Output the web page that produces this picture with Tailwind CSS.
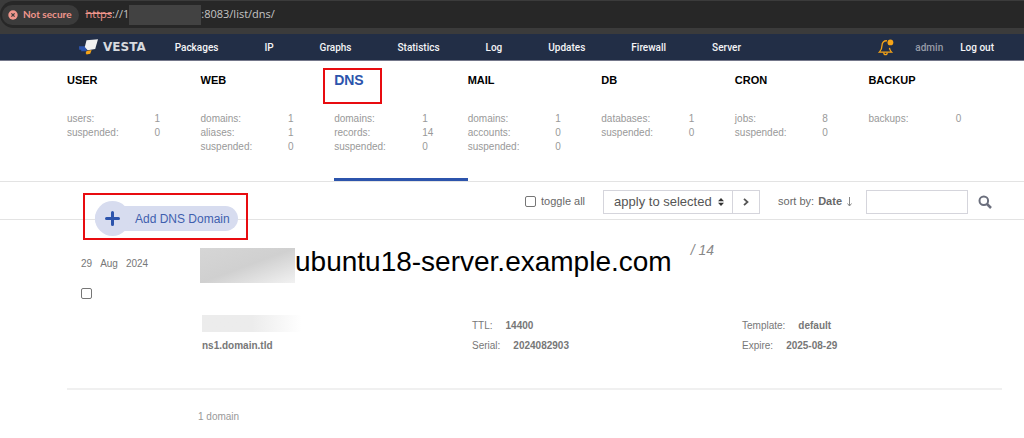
<!DOCTYPE html>
<html lang="en">
<head>
    <meta charset="UTF-8">
    <meta name="viewport" content="width=device-width, initial-scale=1.0">
    <title>Vesta - DNS</title>
    <script src="https://cdn.jsdelivr.net/npm/@tailwindcss/browser@4"></script>
</head>
<body class="bg-white font-['Liberation_Sans',Arial,sans-serif] text-[10px] text-[#777]">

    <!-- Address bar -->
    <div class="bg-[#3b3b3b] pt-px pb-1.5">
        <div class="flex h-[27px] items-center rounded-l-full bg-[#272727] pl-0.5">
            <div class="flex h-5 items-center gap-[5px] rounded-full bg-[#3b3b3b] pr-2 pl-1.5 font-[Lato,sans-serif] text-[10px] font-bold text-[#f0968c]">
                <svg class="size-2.5" viewBox="0 0 10 10">
                    <circle cx="5" cy="5" r="4.7" fill="#f0968c"/>
                    <path d="M3.4 3.4l3.2 3.2M6.6 3.4L3.4 6.6" stroke="#3b3b3b" stroke-width="1.2"/>
                </svg>
                Not secure
            </div>
            <div class="flex items-center pl-1.5 font-['Open_Sans',sans-serif] text-[11px] text-[#c4c4c4]">
                <span class="text-[#f0968c] line-through">https</span><span>://1</span>
                <span class="h-5 w-[72px] bg-[#424242]"></span>
                <span>:8083/list/dns/</span>
            </div>
        </div>
    </div>

    <!-- Top menu -->
    <header class="flex h-[27px] items-center border-b border-[#74778a] bg-[#222e46] pr-[30px] pl-[79px] font-[Roboto,sans-serif] text-[10px] font-medium text-[#f4f4f6]">
        <a href="#" class="mr-[29px] flex items-center gap-[5px] font-['DejaVu_Sans',sans-serif] text-xs font-bold text-[#d8dade]">
            <svg class="h-4 w-[19px]" viewBox="0 0 19 16">
                <path d="M0 7.200h6.500L8 12.300H2.200V10.800H.2z" fill="#2c54ac"/>
                <path d="M7.500 1.200L19 .3 16.200 10 8.600 11.200 5.800 8z" fill="#f1f1f1"/>
                <path d="M7.600 12l5-1-1.400 3.800-3.600.7-1-1.400z" fill="#f6a417"/>
            </svg>
            VESTA
        </a>
        <nav class="flex gap-[46px]">
            <a href="#">Packages</a>
            <a href="#">IP</a>
            <a href="#">Graphs</a>
            <a href="#">Statistics</a>
            <a href="#">Log</a>
            <a href="#">Updates</a>
            <a href="#">Firewall</a>
            <a href="#">Server</a>
        </nav>
        <div class="ml-auto flex items-center">
            <button type="button" aria-label="Notifications" class="mr-[21px]">
                <svg class="h-[17px] w-4" viewBox="0 0 16 17" fill="none" stroke="#f6a417" stroke-width="1.3">
                    <path d="M9 1.800C5.800 1.500 4 3.800 4 6.500c0 3.500-.8 4.800-2.600 6.600h12.200c-1.200-1.200-1.900-2.200-2.200-4.300"/>
                    <path d="M5.800 13.400a1.700 2.300 0 0 0 3.400 0"/>
                    <circle cx="12.400" cy="3.400" r="2.900" fill="#f6a417" stroke="none"/>
                </svg>
            </button>
            <a href="#" class="mr-[17px] text-[#989ca8]">admin</a>
            <a href="#">Log out</a>
        </div>
    </header>

    <!-- Section stats -->
    <section class="border-b border-[#e3e3e3] pr-[22px] pl-[67px] leading-[14px] text-[#999]">
        <div class="grid h-[120px] grid-cols-7">
            <a href="#" class="pt-3">
                <h2 class="mb-[25px] text-[11px] font-bold text-black">USER</h2>
                <p class="flex w-[93px] justify-between"><span>users:</span><span>1</span></p>
                <p class="flex w-[93px] justify-between"><span>suspended:</span><span>0</span></p>
            </a>
            <a href="#" class="pt-3">
                <h2 class="mb-[25px] text-[11px] font-bold text-black">WEB</h2>
                <p class="flex w-[93px] justify-between"><span>domains:</span><span>1</span></p>
                <p class="flex w-[93px] justify-between"><span>aliases:</span><span>1</span></p>
                <p class="flex w-[93px] justify-between"><span>suspended:</span><span>0</span></p>
            </a>
            <a href="#" class="relative border-b-3 border-[#2c54ac] pt-3">
                <h2 class="mb-[25px] text-sm leading-[14px] font-bold text-[#2c54ac]">DNS</h2>
                <p class="flex"><span class="w-[88px]">domains:</span><span>1</span></p>
                <p class="flex"><span class="w-[88px]">records:</span><span>14</span></p>
                <p class="flex"><span class="w-[88px]">suspended:</span><span>0</span></p>
                <span class="absolute top-[7px] -left-[11px] h-9 w-[59px] border-2 border-[#e80c10]"></span>
            </a>
            <a href="#" class="pt-3">
                <h2 class="mb-[25px] text-[11px] font-bold text-black">MAIL</h2>
                <p class="flex w-[93px] justify-between"><span>domains:</span><span>1</span></p>
                <p class="flex w-[93px] justify-between"><span>accounts:</span><span>0</span></p>
                <p class="flex w-[93px] justify-between"><span>suspended:</span><span>0</span></p>
            </a>
            <a href="#" class="pt-3">
                <h2 class="mb-[25px] text-[11px] font-bold text-black">DB</h2>
                <p class="flex w-[93px] justify-between"><span>databases:</span><span>1</span></p>
                <p class="flex w-[93px] justify-between"><span>suspended:</span><span>0</span></p>
            </a>
            <a href="#" class="pt-3">
                <h2 class="mb-[25px] text-[11px] font-bold text-black">CRON</h2>
                <p class="flex w-[93px] justify-between"><span>jobs:</span><span>8</span></p>
                <p class="flex w-[93px] justify-between"><span>suspended:</span><span>0</span></p>
            </a>
            <a href="#" class="pt-3">
                <h2 class="mb-[25px] text-[11px] font-bold text-black">BACKUP</h2>
                <p class="flex w-[93px] justify-between"><span>backups:</span><span>0</span></p>
            </a>
        </div>
    </section>

    <!-- Toolbar -->
    <section class="relative flex h-[38px] items-center justify-end border-b border-[#e3e3e3] pt-0.5 pr-8 text-[11px] text-[#686868]">
        <!-- the add button hangs over the bottom line -->
        <div class="absolute top-[11px] left-[83px] flex h-[47px] w-[165px] items-center border-2 border-[#e80c10] pt-1 pl-2.5">
            <button type="button" class="flex h-[25px] items-center rounded-full bg-[#d7dcef] pr-2 text-xs text-[#3f5fae]">
                <span class="mr-[5px] flex size-[35px] items-center justify-center rounded-full bg-[#d7dcef]">
                    <svg class="size-[15px]" viewBox="0 0 15 15"><path d="M7.500 1.500v12M1.500 7.500h12" stroke="#2c54ac" stroke-width="3" stroke-linecap="round"/></svg>
                </span>
                Add DNS Domain
            </button>
        </div>

        <label class="mr-[18px] flex items-center gap-[5px]">
            <input type="checkbox" class="size-[11px] appearance-none rounded-xs border border-[#767676] bg-white">
            toggle all
        </label>
        <form class="mr-[18px] flex h-6 border border-[#d5d5dc]">
            <div class="relative">
                <select aria-label="Bulk action" class="h-full w-32 appearance-none bg-white pl-2.5 text-[13px] text-[#555]">
                    <option>apply to selected</option>
                </select>
                <svg class="pointer-events-none absolute top-[7px] right-2 h-2 w-1.5" viewBox="0 0 6 8" fill="#333"><path d="M0 3.200L3 0l3 3.200zM0 4.800L3 8l3-3.200z"/></svg>
            </div>
            <button type="submit" aria-label="Apply" class="flex w-[27px] items-center justify-center border-l border-[#d5d5dc]">
                <svg class="h-2 w-1.5" viewBox="0 0 6 8" fill="none" stroke="#555" stroke-width="1.800"><path d="M1 .8L4.500 4 1 7.200"/></svg>
            </button>
        </form>
        <p class="mr-[13px] flex items-center gap-1">
            sort by: <b>Date</b>
            <svg class="h-2.5 w-[7px]" viewBox="0 0 7 10" fill="none" stroke="#888"><path d="M3.500 0v9M1.500 6.500l2 2.500 2-2.500"/></svg>
        </p>
        <input type="text" aria-label="Search" class="mr-2.5 h-6 w-[102px] border border-[#d5d5dc] px-1">
        <button type="submit" aria-label="Run search">
            <svg class="size-3.5" viewBox="0 0 14 14" fill="none" stroke="#6b6f7d"><circle cx="5.800" cy="5.800" r="4.300" stroke-width="2"/><path d="M9 9l4 4" stroke-width="2.500"/></svg>
        </button>
    </section>

    <!-- Domain list -->
    <main class="pr-[22px] pl-[67px]">
        <article class="flex border-b-2 border-[#f0f0f0] pt-7 pb-8">
            <div class="w-[133px] pt-2 pl-3.5 leading-4">
                <p class="mb-4 flex gap-2"><span>29</span><span>Aug</span><span>2024</span></p>
                <input type="checkbox" aria-label="Select domain" class="block size-[11px] appearance-none rounded-xs border border-[#767676] bg-white">
            </div>
            <div class="flex-1">
                <div class="mb-8 flex">
                    <span class="h-[35px] w-[95px] bg-linear-to-br from-[#d6d6d6] via-[#d0d0d0] to-[#f2f2f2]"></span>
                    <h1 class="text-[28px] leading-7 text-black">ubuntu18-server.example.com</h1>
                    <span class="ml-[19px] text-sm leading-[5px] text-[#888] italic">/ 14</span>
                </div>
                <div class="grid grid-cols-[270px_270px_1fr] pl-0.5 leading-5">
                    <div>
                        <div class="mb-1 h-[17px] w-[100px] bg-linear-to-r from-[#ececec] via-[#ececec] to-white"></div>
                        <p class="font-bold">ns1.domain.tld</p>
                    </div>
                    <div class="pt-px">
                        <p class="flex gap-[13px]">TTL: <b>14400</b></p>
                        <p class="flex gap-[13px]">Serial: <b>2024082903</b></p>
                    </div>
                    <div class="pt-px">
                        <p class="flex gap-[13px]">Template: <b>default</b></p>
                        <p class="flex gap-[13px]">Expire: <b>2025-08-29</b></p>
                    </div>
                </div>
            </div>
        </article>
        <p class="pt-[19px] pl-[131px] text-[#999]">1 domain</p>
    </main>

</body>
</html>
